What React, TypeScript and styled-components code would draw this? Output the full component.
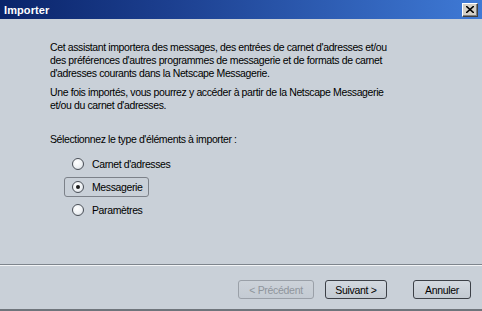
import React, { useState } from 'react';
import styled, { createGlobalStyle } from 'styled-components';

const bg = '#c9d0d8';

const GlobalStyle = createGlobalStyle`
  html, body {
    margin: 0;
    padding: 0;
    background: ${bg};
  }
  body {
    font-family: "Liberation Sans", Arial, sans-serif;
    font-size: 10.5px;
    letter-spacing: -0.38px;
    color: #000;
  }
`;

const Window = styled.div`
  width: 482px;
  height: 311px;
  box-sizing: border-box;
  display: flex;
  flex-direction: column;
  background: ${bg};
  border-bottom: 2px solid #6f757c;
`;

const TitleBar = styled.div`
  height: 19px;
  flex: none;
  display: flex;
  align-items: center;
  justify-content: space-between;
  padding: 0 4px 0 4px;
  background: linear-gradient(to right, #0a246a 0%, #1c3f8f 35%, #3f7ad6 100%);
`;

const Title = styled.span`
  color: #fff;
  font-weight: bold;
  font-size: 11px;
  letter-spacing: 0.1px;
`;

const CloseButton = styled.button`
  width: 16px;
  height: 14px;
  padding: 0;
  margin: 0;
  display: flex;
  align-items: center;
  justify-content: center;
  background: #d4d0c8;
  border: 1px solid;
  border-color: #fff #404040 #404040 #fff;
  box-shadow: inset -1px -1px 0 #808080;
`;

const Content = styled.div`
  flex: 1;
  padding: 22px 0 0 50px;
`;

const Text = styled.p`
  margin: 0 0 6px 0;
  line-height: 13px;
  white-space: nowrap;
`;

const Line = styled.span`
  display: block;
`;

const Prompt = styled.p`
  margin: 21px 0 8px 0;
  line-height: 13px;
`;

const RadioList = styled.div`
  display: flex;
  flex-direction: column;
  gap: 3px;
  margin-left: 14px;
`;

const RadioItem = styled.label<{ $focused?: boolean }>`
  align-self: flex-start;
  height: 20px;
  box-sizing: border-box;
  display: flex;
  align-items: center;
  gap: 8px;
  padding: 0 6px 0 7px;
  border: 1px solid ${(p) => (p.$focused ? '#7c8189' : 'transparent')};
  border-radius: 3px;
  cursor: default;
`;

const Circle = styled.span<{ $checked?: boolean }>`
  width: 12px;
  height: 12px;
  box-sizing: border-box;
  border-radius: 50%;
  border: 1px solid #4a4f57;
  background: radial-gradient(circle at 40% 35%, #ffffff 0%, #eef1f4 55%, #c6ccd4 100%);
  display: flex;
  align-items: center;
  justify-content: center;
  &::after {
    content: '';
    width: 4px;
    height: 4px;
    border-radius: 50%;
    background: #1a1a1a;
    display: ${(p) => (p.$checked ? 'block' : 'none')};
  }
`;

const Separator = styled.div`
  height: 0;
  border-top: 1px solid #7e858d;
  border-bottom: 1px solid #f2f4f6;
`;

const Footer = styled.div`
  height: 43px;
  flex: none;
  display: flex;
  justify-content: flex-end;
  align-items: flex-start;
  padding: 14px 11px 0 0;
  box-sizing: border-box;
`;

const Button = styled.button<{ $w: number; $gap?: number }>`
  width: ${(p) => p.$w}px;
  height: 19px;
  margin-left: ${(p) => p.$gap ?? 0}px;
  padding: 0;
  font-family: "Liberation Sans", Arial, sans-serif;
  font-size: 10.5px;
  letter-spacing: -0.3px;
  color: #000;
  background: linear-gradient(#d3d9e0, #c3cad2);
  border: 1px solid #3c4047;
  border-radius: 3px;
  &:disabled {
    color: #8f959c;
    border-color: #9aa0a8;
    background: linear-gradient(#ccd2d9, #c4cbd3);
  }
`;

const options = ["Carnet d'adresses", 'Messagerie', 'Paramètres'];

function App() {
  const [selected, setSelected] = useState(1);

  return (
    <>
      <GlobalStyle />
      <Window>
        <TitleBar>
          <Title>Importer</Title>
          <CloseButton aria-label="Fermer">
            <svg width="8" height="7" viewBox="0 0 8 7">
              <path d="M0 0 L8 7 M8 0 L0 7" stroke="#000" strokeWidth="1.6" />
            </svg>
          </CloseButton>
        </TitleBar>
        <Content>
          <Text>
            <Line>Cet assistant importera des messages, des entrées de carnet d'adresses et/ou</Line>
            <Line>des préférences d'autres programmes de messagerie et de formats de carnet</Line>
            <Line>d'adresses courants dans la Netscape Messagerie.</Line>
          </Text>
          <Text>
            <Line>Une fois importés, vous pourrez y accéder à partir de la Netscape Messagerie</Line>
            <Line>et/ou du carnet d'adresses.</Line>
          </Text>
          <Prompt>Sélectionnez le type d'éléments à importer :</Prompt>
          <RadioList>
            {options.map((label, i) => (
              <RadioItem key={label} $focused={selected === i} onClick={() => setSelected(i)}>
                <Circle $checked={selected === i} />
                {label}
              </RadioItem>
            ))}
          </RadioList>
        </Content>
        <Separator />
        <Footer>
          <Button $w={76} disabled>
            &lt; Précédent
          </Button>
          <Button $w={62} $gap={11}>
            Suivant &gt;
          </Button>
          <Button $w={58} $gap={26}>
            Annuler
          </Button>
        </Footer>
      </Window>
    </>
  );
}

export default App;
